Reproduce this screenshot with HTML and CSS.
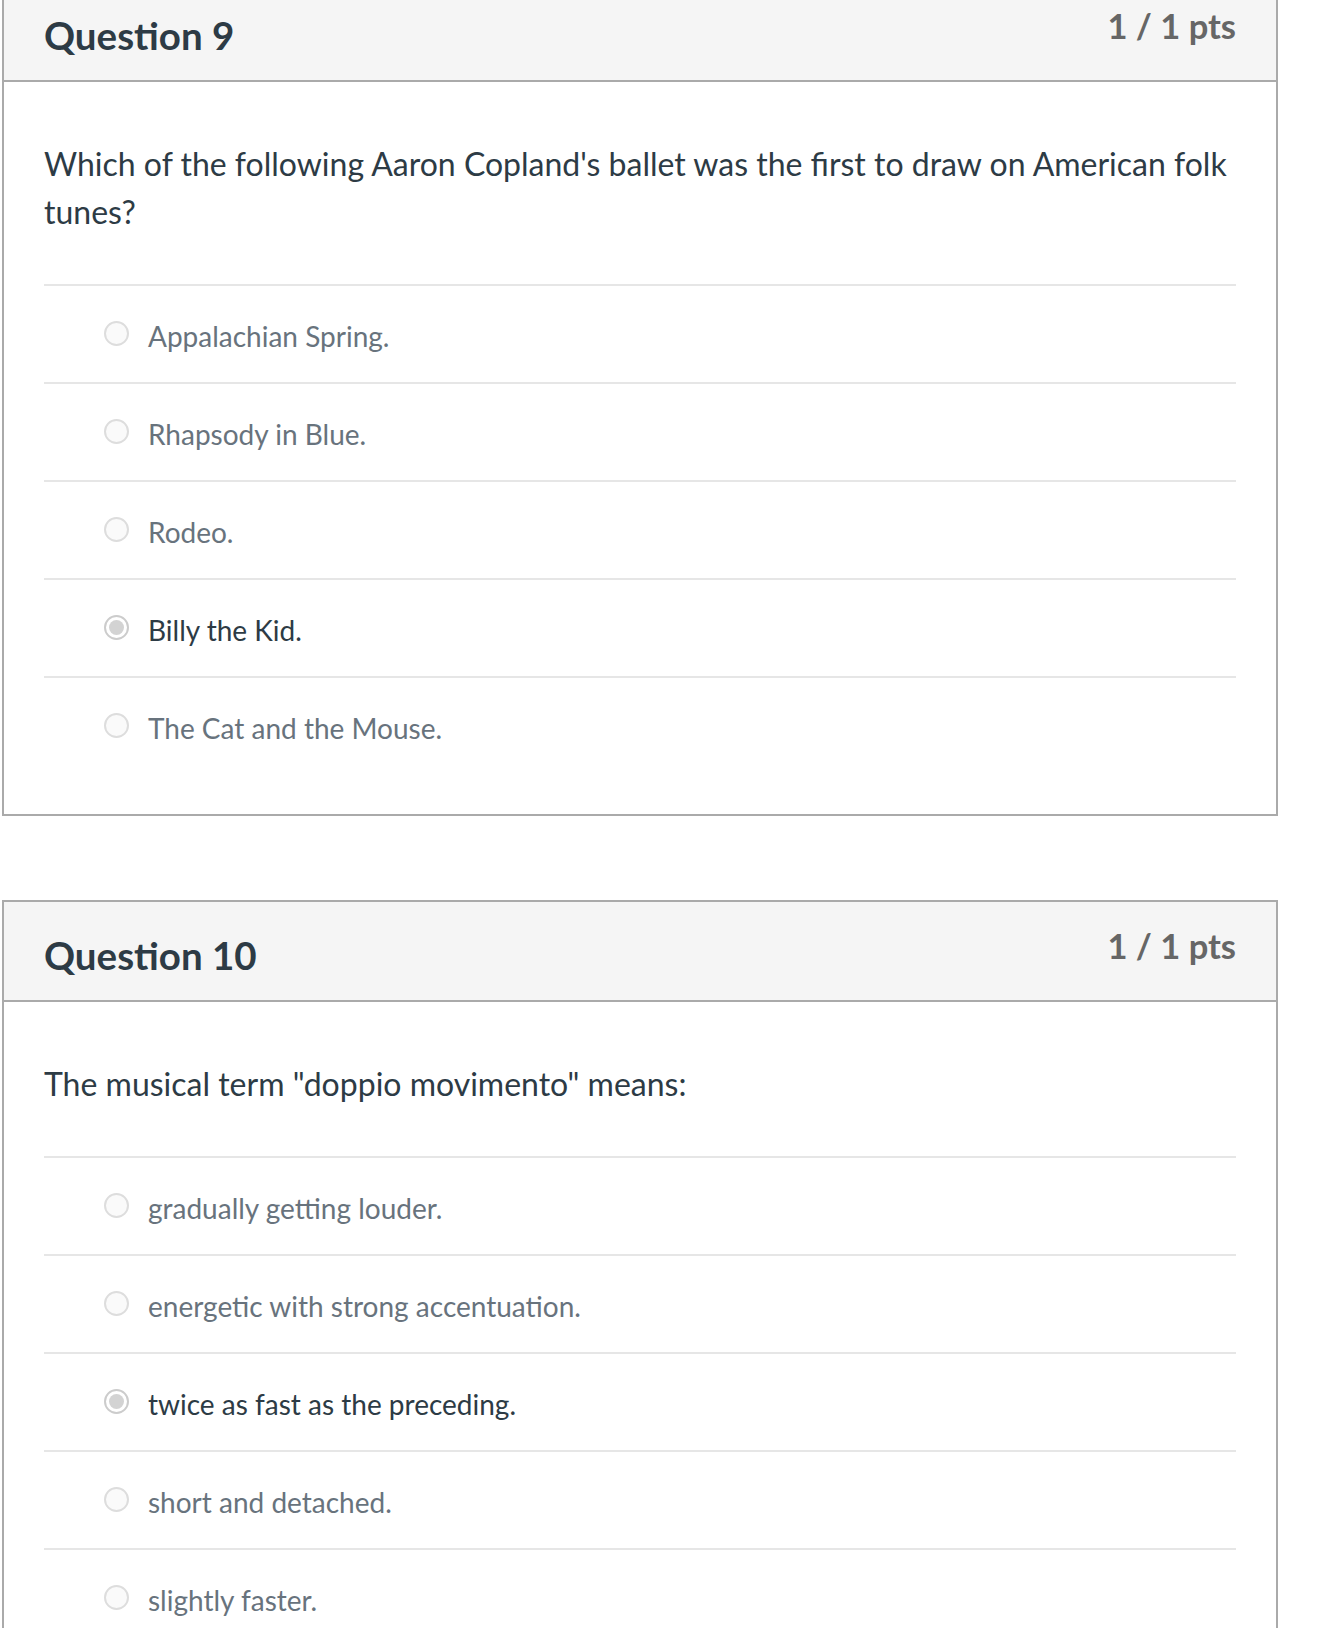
FILE: index.html
```html
<!DOCTYPE html>
<html lang="en">
<head>
<meta charset="utf-8">
<title>Quiz results</title>
<link rel="stylesheet" href="styles.css">
</head>
<body>
<div class="page">
  <section class="question">
    <header class="q-header">
      <h2 class="q-title">Question 9</h2>
      <div class="q-pts">1 / 1 pts</div>
    </header>
    <div class="q-body">
      <p class="q-text">Which of the following Aaron Copland's ballet was the first to draw on American folk tunes?</p>
      <div class="answers">
        <div class="answer"><span class="radio"></span><span class="label">Appalachian Spring.</span></div>
        <div class="answer"><span class="radio"></span><span class="label">Rhapsody in Blue.</span></div>
        <div class="answer"><span class="radio"></span><span class="label">Rodeo.</span></div>
        <div class="answer selected"><span class="radio"></span><span class="label">Billy the Kid.</span></div>
        <div class="answer"><span class="radio"></span><span class="label">The Cat and the Mouse.</span></div>
      </div>
    </div>
  </section>

  <section class="question">
    <header class="q-header">
      <h2 class="q-title">Question 10</h2>
      <div class="q-pts">1 / 1 pts</div>
    </header>
    <div class="q-body">
      <p class="q-text">The musical term "doppio movimento" means:</p>
      <div class="answers">
        <div class="answer"><span class="radio"></span><span class="label">gradually getting louder.</span></div>
        <div class="answer"><span class="radio"></span><span class="label">energetic with strong accentuation.</span></div>
        <div class="answer selected"><span class="radio"></span><span class="label">twice as fast as the preceding.</span></div>
        <div class="answer"><span class="radio"></span><span class="label">short and detached.</span></div>
        <div class="answer"><span class="radio"></span><span class="label">slightly faster.</span></div>
      </div>
    </div>
  </section>
</div>
</body>
</html>
```
FILE: styles.css
```css
html, body {
  margin: 0;
  padding: 0;
  background: #ffffff;
}
body {
  font-family: Lato, "Noto Sans", "Liberation Sans", sans-serif;
  color: #2d3b45;
  overflow: hidden;
  height: 1628px;
}
.page {
  margin-top: -20px;
  padding-left: 2px;
  display: flex;
  flex-direction: column;
  gap: 84px;
}
.question {
  box-sizing: border-box;
  width: 1276px;
  border: 2px solid #aaaaaa;
  background: #fff;
}
.q-header {
  box-sizing: border-box;
  height: 100px;
  background: #f5f5f5;
  border-bottom: 2px solid #aaaaaa;
  display: flex;
  justify-content: space-between;
  align-items: flex-start;
  padding: 0 40px 0 40px;
}
.q-title {
  margin: 34px 0 0 0;
  font-size: 38.5px;
  line-height: 1;
  font-weight: 700;
  color: #2d3b45;
}
.q-pts {
  margin-top: 27px;
  font-size: 34.5px;
  line-height: 1;
  font-weight: 700;
  color: #666666;
}
.q-body {
  padding: 0 40px 40px 40px;
}
.q-text {
  margin: 58px 0 48px 0;
  font-size: 32px;
  line-height: 48px;
  color: #2d3b45;
}
.answer {
  border-top: 2px solid #e6e6e6;
  height: 96px;
  display: flex;
  align-items: center;
  padding-left: 60px;
  gap: 19px;
}
.radio {
  box-sizing: border-box;
  width: 25px;
  height: 25px;
  border-radius: 50%;
  border: 2px solid #dddddd;
  background: #fafafa;
  flex: none;
  position: relative;
  top: -1px;
}
.answer.selected .radio {
  border-color: #cccccc;
  background: #ffffff;
}
.answer.selected .radio::after {
  content: "";
  position: absolute;
  left: 3px;
  top: 3px;
  width: 15px;
  height: 15px;
  border-radius: 50%;
  background: #d3d3d3;
}
.label {
  font-size: 28px;
  line-height: 42px;
  color: #68737d;
  position: relative;
  top: 2px;
}
.answer.selected .label {
  color: #2d3b45;
}
```
